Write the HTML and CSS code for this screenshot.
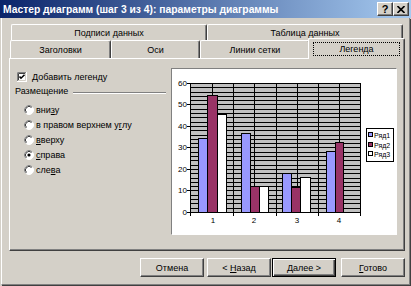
FILE: index.html
```html
<!DOCTYPE html>
<html lang="ru">
<head>
<meta charset="utf-8">
<title>Мастер диаграмм</title>
<link rel="stylesheet" href="styles.css">
</head>
<body>
<div class="window">
  <div class="titlebar">
    <span class="title">Мастер диаграмм (шаг 3 из 4): параметры диаграммы</span>
    <div class="caption-btns">
      <span class="cbtn help">?</span>
      <span class="cbtn close"><svg width="8" height="7" viewBox="0 0 8 7"><path d="M0.5 0 L7.5 7 M7.5 0 L0.5 7" stroke="#000" stroke-width="1.6" fill="none"/></svg></span>
    </div>
  </div>
  <div class="client">
    <div class="tabrow back">
      <div class="tab tw-back">Подписи данных</div>
      <div class="tab tw-back">Таблица данных</div>
    </div>
    <div class="tabrow front">
      <div class="tab tw-titles">Заголовки</div>
      <div class="tab tw-axes">Оси</div>
      <div class="tab tw-grid">Линии сетки</div>
      <div class="tab tw-legend active"><span class="focus">Легенда</span></div>
    </div>
    <div class="panel">
      <div class="options">
        <div class="chk-row">
          <svg class="check" width="10" height="10" viewBox="0 0 10 10">
            <rect x="0" y="0" width="10" height="10" fill="#fff"/>
            <path d="M0.5 10 V0.5 H10" stroke="#808080" fill="none"/>
            <path d="M1.5 9 V1.5 H9" stroke="#404040" fill="none"/>
            <path d="M9.5 0 V9.5 H0" stroke="#fff" fill="none"/>
            <path d="M8.5 1 V8.5 H1" stroke="#d4d0c8" fill="none"/>
            <path d="M2.5 4.5 L4 6.2 L7.5 2.8" stroke="#000" stroke-width="1.6" fill="none"/>
          </svg>
          <span class="label">Добавить легенду</span>
        </div>
        <div class="group-title"><span>Размещение</span><span class="rule"></span></div>
        <div class="radios">
          <div class="radio-row">
            <svg class="radio" width="10" height="10" viewBox="0 0 10 10"><circle cx="5" cy="5" r="4.5" fill="#fff" stroke="#fff"/><path d="M1.8 8.2 A4.5 4.5 0 0 1 8.2 1.8" stroke="#808080" fill="none"/><path d="M2.5 7.5 A3.5 3.5 0 0 1 7.5 2.5" stroke="#404040" fill="none"/></svg>
            <span class="label">вни<u>з</u>у</span>
          </div>
          <div class="radio-row">
            <svg class="radio" width="10" height="10" viewBox="0 0 10 10"><circle cx="5" cy="5" r="4.5" fill="#fff" stroke="#fff"/><path d="M1.8 8.2 A4.5 4.5 0 0 1 8.2 1.8" stroke="#808080" fill="none"/><path d="M2.5 7.5 A3.5 3.5 0 0 1 7.5 2.5" stroke="#404040" fill="none"/></svg>
            <span class="label">в правом верхнем у<u>г</u>лу</span>
          </div>
          <div class="radio-row">
            <svg class="radio" width="10" height="10" viewBox="0 0 10 10"><circle cx="5" cy="5" r="4.5" fill="#fff" stroke="#fff"/><path d="M1.8 8.2 A4.5 4.5 0 0 1 8.2 1.8" stroke="#808080" fill="none"/><path d="M2.5 7.5 A3.5 3.5 0 0 1 7.5 2.5" stroke="#404040" fill="none"/></svg>
            <span class="label"><u>в</u>верху</span>
          </div>
          <div class="radio-row">
            <svg class="radio" width="10" height="10" viewBox="0 0 10 10"><circle cx="5" cy="5" r="4.5" fill="#fff" stroke="#fff"/><path d="M1.8 8.2 A4.5 4.5 0 0 1 8.2 1.8" stroke="#808080" fill="none"/><path d="M2.5 7.5 A3.5 3.5 0 0 1 7.5 2.5" stroke="#404040" fill="none"/><circle cx="5" cy="5" r="1.6" fill="#000"/></svg>
            <span class="label"><u>с</u>права</span>
          </div>
          <div class="radio-row">
            <svg class="radio" width="10" height="10" viewBox="0 0 10 10"><circle cx="5" cy="5" r="4.5" fill="#fff" stroke="#fff"/><path d="M1.8 8.2 A4.5 4.5 0 0 1 8.2 1.8" stroke="#808080" fill="none"/><path d="M2.5 7.5 A3.5 3.5 0 0 1 7.5 2.5" stroke="#404040" fill="none"/></svg>
            <span class="label">сле<u>в</u>а</span>
          </div>
        </div>
      </div>
      <div class="preview">
        <svg class="chart" width="224" height="165" viewBox="0 0 224 165" shape-rendering="crispEdges">
          <rect x="18.5" y="14.5" width="170" height="129" fill="#c0c0c0" stroke="#000"/>
          <path stroke="#000" fill="none" d="M18 139.5H188M18 134.5H188M18 130.5H188M18 126.5H188M18 121.5H188M18 117.5H188M18 113.5H188M18 109.5H188M18 104.5H188M18 100.5H188M18 96.5H188M18 91.5H188M18 87.5H188M18 83.5H188M18 78.5H188M18 74.5H188M18 70.5H188M18 66.5H188M18 61.5H188M18 57.5H188M18 53.5H188M18 48.5H188M18 44.5H188M18 40.5H188M18 35.5H188M18 31.5H188M18 27.5H188M18 23.5H188M18 18.5H188"/>
          <path stroke="#000" fill="none" d="M40.5 14V143M61.5 14V143M82.5 14V143M104.5 14V143M125.5 14V143M146.5 14V143M167.5 14V143"/>
          <path stroke="#000" fill="none" d="M18.5 143V147M61.5 143V147M104.5 143V147M146.5 143V147M188.5 143V147M15 143.5H18M15 121.5H18M15 100.5H18M15 78.5H18M15 57.5H18M15 35.5H18M15 14.5H18"/>
          <g stroke="#000">
            <rect x="26.5" y="69.5" width="9" height="74" fill="#9999ff"/>
            <rect x="35.5" y="26.5" width="10" height="117" fill="#993366"/>
            <rect x="45.5" y="45.5" width="9" height="98" fill="#ffffff"/>
            <rect x="69.5" y="64.5" width="9" height="79" fill="#9999ff"/>
            <rect x="78.5" y="117.5" width="9" height="26" fill="#993366"/>
            <rect x="87.5" y="117.5" width="9" height="26" fill="#ffffff"/>
            <rect x="110.5" y="104.5" width="9" height="39" fill="#9999ff"/>
            <rect x="119.5" y="118.5" width="9" height="25" fill="#993366"/>
            <rect x="128.5" y="108.5" width="10" height="35" fill="#ffffff"/>
            <rect x="154.5" y="82.5" width="9" height="61" fill="#9999ff"/>
            <rect x="163.5" y="73.5" width="8" height="70" fill="#993366"/>
          </g>
          <g class="axis-text" text-anchor="end">
            <text x="15" y="17">60</text>
            <text x="15" y="38">50</text>
            <text x="15" y="60">40</text>
            <text x="15" y="81">30</text>
            <text x="15" y="103">20</text>
            <text x="15" y="124">10</text>
            <text x="15" y="146">0</text>
          </g>
          <g class="axis-text" text-anchor="middle">
            <text x="41" y="154">1</text>
            <text x="82" y="154">2</text>
            <text x="125" y="154">3</text>
            <text x="167" y="154">4</text>
          </g>
          <rect x="194.5" y="59.5" width="27" height="33" fill="#fff" stroke="#000"/>
          <g stroke="#000">
            <rect x="196.5" y="63.5" width="4" height="4" fill="#9999ff"/>
            <rect x="196.5" y="73.5" width="4" height="4" fill="#993366"/>
            <rect x="196.5" y="82.5" width="4" height="4" fill="#ffffff"/>
          </g>
          <g class="legend-text">
            <text x="202" y="68.5">Ряд1</text>
            <text x="202" y="78.5">Ряд2</text>
            <text x="202" y="87.5">Ряд3</text>
          </g>
        </svg>
      </div>
    </div>
    <div class="buttons">
      <div class="btn"><span>Отмена</span></div>
      <div class="btn gap3"><span>&lt; <u>Н</u>азад</span></div>
      <div class="btn default gap1"><span><u>Д</u>алее &gt;</span></div>
      <div class="btn gap5"><span><u>Г</u>отово</span></div>
    </div>
  </div>
</div>
</body>
</html>
```
FILE: styles.css
```css
html, body {
  margin: 0;
  padding: 0;
  background: #d4d0c8;
}

.window {
  width: 411px;
  height: 286px;
  display: flex;
  flex-direction: column;
  background: #d4d0c8;
  font-family: "Liberation Sans", Arial, sans-serif;
  font-size: 9px;
  color: #000;
  overflow: hidden;
}

.titlebar {
  flex: none;
  height: 18px;
  display: flex;
  align-items: center;
  justify-content: space-between;
  padding: 0 2px 0 3px;
  background: linear-gradient(to right, #0a246a, #a6caf0);
  color: #fff;
  font-weight: bold;
  font-size: 10.3px;
}

.title {
  white-space: nowrap;
}

.caption-btns {
  display: flex;
}

.cbtn {
  width: 16px;
  height: 14px;
  box-sizing: border-box;
  background: #d4d0c8;
  border-top: 1px solid #fff;
  border-left: 1px solid #fff;
  border-right: 1px solid #404040;
  border-bottom: 1px solid #404040;
  box-shadow: inset -1px -1px #808080;
  display: flex;
  align-items: center;
  justify-content: center;
  color: #000;
  font-size: 11px;
  font-weight: bold;
  line-height: 1;
}

.client {
  flex: 1;
  margin: 0 1px 1px 1px;
  border-left: 1px solid #fff;
  border-right: 1px solid #808080;
  border-bottom: 1px solid #808080;
  box-shadow: 1px 1px 0 #404040;
  padding-top: 6px;
  display: flex;
  flex-direction: column;
}

.tabrow {
  display: flex;
  flex: none;
}

.tabrow.back {
  height: 16px;
  margin-left: 9px;
}

.tabrow.front {
  height: 18px;
  margin-left: 8px;
  align-items: flex-end;
}

.tab {
  box-sizing: border-box;
  height: 100%;
  background: #d4d0c8;
  border-top: 1px solid #fff;
  border-left: 1px solid #fff;
  border-right: 1px solid #404040;
  box-shadow: inset -1px 0 #808080;
  border-radius: 2px 2px 0 0;
  display: flex;
  align-items: center;
  justify-content: center;
  white-space: nowrap;
  padding-top: 1px;
}

.tw-back { width: 196px; }
.tw-titles { width: 101px; }
.tw-axes { width: 89px; }
.tw-grid { width: 110px; }
.tw-legend { width: 93px; }

.tab.active {
  width: 97px;
  height: 21px;
  margin: 0 -2px -1px -2px;
  position: relative;
  z-index: 1;
  padding-top: 0;
}

.focus {
  box-sizing: border-box;
  width: 87px;
  height: 14px;
  border: 1px dotted #000;
  display: flex;
  align-items: center;
  justify-content: center;
}

.panel {
  flex: none;
  margin-left: 7px;
  width: 396px;
  height: 193px;
  box-sizing: border-box;
  border-top: 1px solid #fff;
  border-left: 1px solid #fff;
  border-right: 1px solid #404040;
  border-bottom: 1px solid #404040;
  box-shadow: inset -1px -1px #808080;
  display: flex;
  align-items: flex-start;
  padding: 9px 0 0 7px;
}

.options {
  width: 154px;
  flex: none;
  padding-top: 4px;
}

.chk-row {
  display: flex;
  align-items: center;
  height: 10px;
}

.check, .radio {
  flex: none;
  display: block;
}

.chk-row .label {
  margin-left: 5px;
}

.group-title {
  display: flex;
  align-items: center;
  height: 10px;
  margin: 4px 0 0 -2px;
}

.rule {
  flex: 1;
  height: 0;
  margin: 4px 5px 0 5px;
  border-top: 1px solid #808080;
  border-bottom: 1px solid #fff;
}

.radios {
  margin: 6px 0 0 7px;
}

.radio-row {
  display: flex;
  align-items: center;
  height: 15px;
}

.radio-row .label {
  margin-left: 2px;
  white-space: nowrap;
}

.preview {
  flex: none;
  width: 226px;
  height: 167px;
  box-sizing: border-box;
  background: #fff;
  border: 1px solid;
  border-color: #808080 #fff #fff #808080;
}

.chart {
  display: block;
}

.axis-text {
  font-family: "Liberation Sans", Arial, sans-serif;
  font-size: 8px;
  fill: #000;
}

.legend-text {
  font-family: "Liberation Sans", Arial, sans-serif;
  font-size: 7px;
  fill: #000;
}

.buttons {
  display: flex;
  justify-content: flex-end;
  margin: 7px 4px 0 0;
}

.btn {
  width: 64px;
  height: 19px;
  box-sizing: border-box;
  border-top: 1px solid #fff;
  border-left: 1px solid #fff;
  border-right: 1px solid #404040;
  border-bottom: 1px solid #404040;
  box-shadow: inset -1px -1px #808080;
  display: flex;
  align-items: center;
  justify-content: center;
  white-space: nowrap;
}

.btn.default {
  border: 1px solid #000;
  box-shadow: inset 1px 1px #fff, inset -1px -1px #404040, inset -2px -2px #808080;
}

.gap1 { margin-left: 1px; }
.gap3 { margin-left: 3px; }
.gap5 { margin-left: 5px; }
```
